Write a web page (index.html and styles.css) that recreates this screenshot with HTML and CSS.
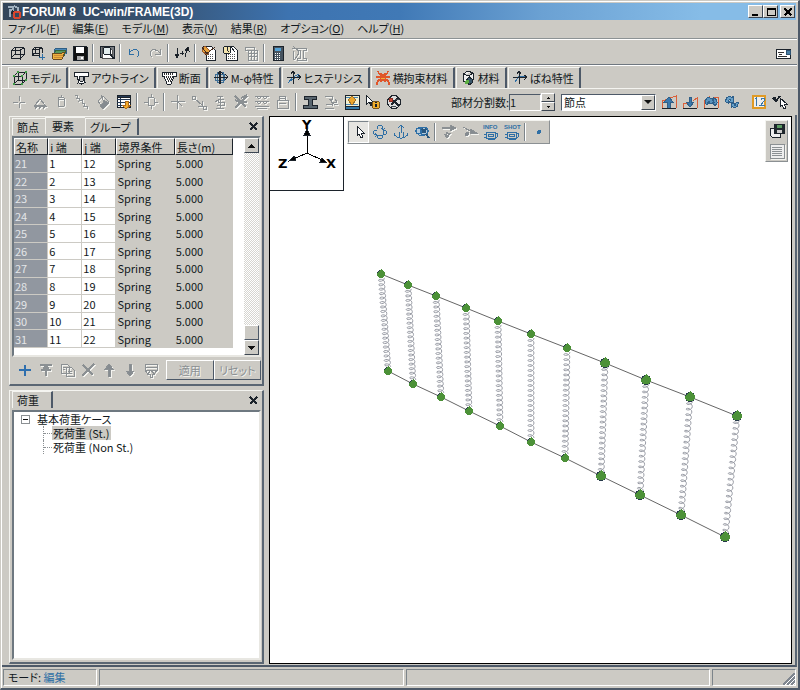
FILE: index.html
```html
<!DOCTYPE html>
<html lang="ja">
<head>
  <meta charset="UTF-8">
  <title>FORUM 8 UC-win/FRAME(3D)</title>
  <link rel="stylesheet" href="styles.css">
</head>
<body>
  <div class="ventana">
    <header class="titulo">
      <svg class="logo" width="16" height="16" viewBox="0 0 16 16"><path d="M2 3h5v3H4v7M8 2l4 2v3" fill="none" stroke="#9fb0bf" stroke-width="2"/><path d="M6 6l4 3-5 1" fill="#20262e"/><circle cx="11" cy="11" r="3.5" fill="none" stroke="#d8452e" stroke-width="2"/></svg>
      <h1>FORUM 8 &nbsp;UC-win/FRAME(3D)</h1>
      <div class="controles">
        <button aria-label="最小化"><svg width="12" height="10"><path d="M2 8h6" stroke="#000" stroke-width="2"/></svg></button>
        <button aria-label="最大化"><svg width="12" height="10"><path d="M2 1.5h8v7H2zM2 2h8" fill="none" stroke="#000"/></svg></button>
        <button class="cerrar" aria-label="閉じる"><svg width="12" height="10"><path d="M2.500 1.500l7 7m0-7l-7 7" stroke="#000" stroke-width="1.500"/></svg></button>
      </div>
    </header>

    <nav class="menu">
      <a href="#">ファイル(<u>F</u>)</a>
      <a href="#">編集(<u>E</u>)</a>
      <a href="#">モデル(<u>M</u>)</a>
      <a href="#">表示(<u>V</u>)</a>
      <a href="#">結果(<u>R</u>)</a>
      <a href="#">オプション(<u>O</u>)</a>
      <a href="#">ヘルプ(<u>H</u>)</a>
    </nav>

    <div class="barra principal">
      <button aria-label="新規"><svg viewBox="0 0 16 16"><path d="M2 6l9-1v9l-9-1zM2 6l4-4 9 1-4 2M15 3v7l-4 4M6 2v7l9 1M6 9l-4 4"/></svg></button>
      <button aria-label="追加"><svg viewBox="0 0 16 16"><path d="M2 5l7-1v7l-7-1zM2 5l3-3 7 1-3 1M12 3v5M5 2v6h4M5 8l-3 2"/><path class="azul" d="M12 9v6M9 12h6"/></svg></button>
      <button aria-label="開く"><svg viewBox="0 0 16 16"><path d="M3 9V5l2-2h10v6" fill="#4b88b8" stroke="#2f5f85"/><path d="M2 11l3-6h10l-2 6z" fill="#58995d" stroke="#35663b"/><path d="M1 8h10l3-1-3 7H2z" fill="#efb23f" stroke="#6b4a20"/><path d="M3 10h9M3 12h8" stroke="#c98a35"/></svg></button>
      <button aria-label="保存"><svg viewBox="0 0 16 16"><path d="M1 1h13l1 1v13H1z" fill="#111"/><path d="M4 2h8v6H4z" fill="#fff" stroke="none"/><path d="M5 11h7v4H5z" fill="#aaa" stroke="none"/><path d="M9 12h2v2H9z" fill="#fff" stroke="none"/></svg></button>
      <i class="sep"></i>
      <button aria-label="印刷プレビュー"><svg viewBox="0 0 16 16"><path d="M1 1h14v11H1z" fill="#777b80"/><path d="M3 2h7l3 3v8H3z" fill="#fff" stroke="#555"/><circle cx="8" cy="6" r="4" fill="#e4eeee"/><path d="M11 9l4 5" stroke-width="2"/></svg></button>
      <i class="sep"></i>
      <button aria-label="元に戻す"><svg viewBox="0 0 16 16"><path class="azul" d="M3 4v5h5M3 8c3-4 9-5 10 0 0 2-1 3-2 4"/></svg></button>
      <button class="apagado" aria-label="やり直し"><svg viewBox="0 0 16 16"><path d="M13 4v5H8M13 8c-3-4-9-5-10 0 0 2 1 3 2 4"/></svg></button>
      <i class="sep"></i>
      <button aria-label="荷重方向"><svg viewBox="0 0 16 16"><path d="M3 3v8M1 9l2 4 2-4zM6 8h4M8 6v4M11 12l2-8M11 5l3-3 1 4z" fill="#111"/></svg></button>
      <i class="sep"></i>
      <button aria-label="計算設定"><svg viewBox="0 0 16 16"><path d="M2 1h8l4 4v10H5V6z" fill="#fff"/><path d="M7 9h6M7 11h6M7 13h6" stroke="#555" stroke-dasharray="1 1"/><path d="M1 4l3-3 5 5-3 4-4-3z" fill="#e6a03b" stroke="#99582a"/><path d="M4 10l10-8M1 2l5 7" stroke="#442b1c"/></svg></button>
      <button aria-label="計算実行"><svg viewBox="0 0 16 16"><path d="M5 1h6l4 4v10H4V6z" fill="#fff"/><path d="M6 9h7M6 11h7M6 13h7" stroke="#555" stroke-dasharray="1 1"/><circle cx="5" cy="5" r="4" fill="#f4e4ad"/><path d="M5 2v3l2 2M9 2l4 5"/></svg></button>
      <button class="apagado" aria-label="結果表"><svg viewBox="0 0 16 16"><path d="M2 2h9v3H2zM5 5h9v10H5zM5 8h9M5 11h9M8 5v10M11 5v10"/></svg></button>
      <i class="sep"></i>
      <button aria-label="電卓"><svg viewBox="0 0 16 16"><path d="M3 1h10v14H3z" fill="#46535f"/><path d="M5 3h6v3H5z" fill="#55a2d6" stroke="none"/><path d="M5 8h6M5 10h6M5 12h6M5 14h6" stroke="#fff" stroke-dasharray="1 1"/></svg></button>
      <button class="apagado" aria-label="断面計算"><svg viewBox="0 0 16 16"><path d="M1 3h4l3 5-4 6H2V6M6 3h9v2h-3v8h3v2H6v-2h3V5H6zM2 1l5 5"/></svg></button>
      <button class="derecha" aria-label="メール"><svg viewBox="0 0 16 16"><path d="M1 4h14v9H1z" fill="#fff"/><path d="M3 7h6M3 11h9M4 9h3" stroke="#333"/><path d="M11 5h4v4h-4z" fill="#477da3" stroke="#2d5272"/></svg></button>
    </div>

    <div class="pestanas" role="tablist">
      <button role="tab" class="activa"><svg viewBox="0 0 16 16"><path d="M2 6h8v8H2zM2 6l4-4h8l-4 4M14 2v8l-4 4M6 2v8h8M6 10l-4 4"/><path d="M2 5v2M10 5v2M6 1v2M14 1v2M2 13v2M10 13v2M14 9v2" stroke="#3f9b45" stroke-width="2"/></svg>モデル</button>
      <button role="tab"><svg viewBox="0 0 16 16"><path d="M1 2h14v4h-3l-1 7H6L4 6H1z" fill="#fff"/><path d="M6 6h5l-1 5H7z" fill="#bbb"/><path d="M4 13v1M8 14v1M12 12v1"/></svg>アウトライン</button>
      <button role="tab"><svg viewBox="0 0 16 16"><path d="M1 2h14v4h-2l-3 8H6L3 6H1z" fill="#fff"/><path d="M3 4h10M5 7h7M6 9h5M7 11h3" stroke="#333" stroke-dasharray="1 1" stroke-width="2"/></svg>断面</button>
      <button role="tab"><svg viewBox="0 0 16 16"><path d="M2 4h9v6H2zM4 2h6v10H4z" stroke="#3e6f97"/><path d="M7 1v13" stroke-width="2"/><path d="M1 7h14M5 4l2-3 3 3M12 4l3 3-3 3"/></svg>M-φ特性</button>
      <button role="tab"><svg viewBox="0 0 16 16"><path class="azul" d="M2 13l5-6 6-3M4 11l9-5"/><path d="M7 1v13M1 7h14M5 4l2-3 2 3M12 5l3 2-3 3"/></svg>ヒステリシス</button>
      <button role="tab"><svg viewBox="0 0 16 16"><path d="M3 1c0 3 2 4 5 4s5-1 5-4M1 7h14M3 10h10M2 15c0-4 2-5 3-5h6c1 0 3 1 3 5M6 3v9M10 3v9" stroke="#e0562a" stroke-width="1.500"/><path d="M6 8h4" stroke="#f2b23a"/></svg>横拘束材料</button>
      <button role="tab"><svg viewBox="0 0 16 16"><path d="M3 4l5-3 5 2v7l-4 4-6-3zM3 4l6 2 4-3M9 6v8" fill="#eee"/><path d="M6 11l3-4 3 2v4l-3 2z" fill="#39576a"/><circle cx="7" cy="12" r="2" fill="#5bad42" stroke="none"/></svg>材料</button>
      <button role="tab"><svg viewBox="0 0 16 16"><path class="azul" d="M3 12l4-6h6"/><path d="M7 1v13M1 7h14M5 4l2-3 2 3M12 5l3 2-3 3"/></svg>ばね特性</button>
    </div>

    <div class="barra secundaria">
      <button class="apagado" aria-label="節点"><svg viewBox="0 0 16 16"><path d="M8 2v5M8 9v5M2 8h5M9 8h5"/></svg></button>
      <button class="apagado" aria-label="支点"><svg viewBox="0 0 16 16"><path d="M8 5l5 6H3zM2 12h13M3 15l2-3M7 15l2-3M11 15l2-3"/></svg></button>
      <button class="apagado" aria-label="部材"><svg viewBox="0 0 16 16"><path d="M5 4l3-1 3 1v8l-3 1-3-1zM5 5h6M8 1v3"/></svg></button>
      <button class="apagado" aria-label="ばね"><svg viewBox="0 0 16 16"><path d="M1 1l3 1-1 2 3 0-1 3 3-1v3h3l-1 3h3l1 3"/></svg></button>
      <button class="apagado" aria-label="塗り"><svg viewBox="0 0 16 16"><path d="M6 1l2 5M3 7l5-5 6 6-6 6z"/><path d="M8 6l6 3-6 6-3-3 3-3z" fill="#858b90"/></svg></button>
      <button aria-label="表取込"><svg viewBox="0 0 16 16"><path d="M1 1h13v12H1z" fill="#fff"/><path d="M1 2h13M1 5h13M1 8h13M1 11h13M4 1v12" stroke="#263a55"/><path d="M1 1h13v2H1z" fill="#263a55"/><path d="M9 7h3v4h3l-5 4-4-4h3z" fill="#f5aa29" stroke="#ab6a1c"/></svg></button>
      <i class="sep"></i>
      <button class="apagado" aria-label="剛体"><svg viewBox="0 0 16 16"><path d="M5 4l3-1 3 1v7l-3 1-3-1zM1 8h4M11 8h4M8 0v3M8 12v3"/></svg></button>
      <i class="sep"></i>
      <button class="apagado" aria-label="座標"><svg viewBox="0 0 16 16"><path d="M7 1v14M1 7h14M7 7l5 5"/></svg></button>
      <button class="apagado" aria-label="移動"><svg viewBox="0 0 16 16"><path d="M1 2h3v3H1zM4 5l7 6M11 7v5H7M12 12h3v3h-3z"/></svg></button>
      <button class="apagado" aria-label="ばね要素"><svg viewBox="0 0 16 16"><path d="M5 2h6M8 2v12M4 14h8M12 5H6v3h6v3H5M3 8l3-2"/></svg></button>
      <button class="apagado" aria-label="削除"><svg viewBox="0 0 16 16"><path d="M2 2l11 11M14 2L2 14M2 6l4 2 8 0M8 4l6-3" stroke-width="1.500"/></svg></button>
      <button class="apagado" aria-label="分布ばね"><svg viewBox="0 0 16 16"><path d="M1 2h14M1 7h14M1 12h14M2 2l3 3 3-3 3 3 3-3M2 7l3 3 3-3 3 3 3-3M3 14h10"/></svg></button>
      <button class="apagado" aria-label="グループ"><svg viewBox="0 0 16 16"><path d="M2 6h11v8H2zM4 6V2h6v4M5 4h5M4 9h7"/></svg></button>
      <i class="sep"></i>
      <button aria-label="H形断面"><svg viewBox="0 0 16 16"><path d="M2 2h12v3h-4v6h5v3H1v-3h5V5H2z" fill="#58646d"/></svg></button>
      <button class="apagado" aria-label="回転"><svg viewBox="0 0 16 16"><path d="M2 2h7v3H6l5 5h4M2 14h9M3 11l7-1M12 5l2 3-4 1M8 5l2 7"/></svg></button>
      <button aria-label="表示設定"><svg viewBox="0 0 16 16"><path d="M1 1h14v11H1z" fill="#f3efd0"/><path d="M2 3h12M2 10h12" stroke="#4786b9"/><path d="M8 2l4 4-4 5-4-5z" fill="#eca52c" stroke="#99702d"/><path d="M1 12h14v3H1z" fill="#357aaa"/></svg></button>
      <button aria-label="情報"><svg viewBox="0 0 16 16"><path d="M1 1v10l3-3 2 4 1-1-2-3h3z" fill="#fff"/><circle cx="11" cy="11" r="4" fill="#f0ad2c" stroke="#7a541d"/><path d="M11 10v3M11 8v1" stroke-width="2"/></svg></button>
      <button aria-label="非表示"><svg viewBox="0 0 16 16"><circle cx="8" cy="8" r="6.500" fill="#ddd"/><path d="M4 4l9 8M12 4L5 11" stroke-width="2"/><circle cx="5" cy="6" r="2" fill="#d04938" stroke="#8a2f24"/><path d="M9 5h4M5 12h5" stroke="#414950"/></svg></button>
      <label class="etiqueta" for="division">部材分割数:</label>
      <input type="text" id="division" value="1">
      <div class="giro">
        <button aria-label="増やす" onclick="cambiarDivision(1)"><svg viewBox="0 0 7 4"><path d="M2 3h3L3.500 1z" fill="#111" stroke="none"/></svg></button>
        <button aria-label="減らす" onclick="cambiarDivision(-1)"><svg viewBox="0 0 7 4"><path d="M2 1h3L3.500 3z" fill="#111" stroke="none"/></svg></button>
      </div>
      <div class="lista">
        <select aria-label="対象"><option>節点</option><option>要素</option></select>
        <span class="flecha"></span>
      </div>
      <button aria-label="上へ"><svg viewBox="0 0 16 16"><path class="rojo" d="M1 14V7l14-5v12"/><path d="M3 8l5-5 4 5H9v6H6V8z" fill="#3978ad" stroke="#315f87"/><path d="M1 14h14"/></svg></button>
      <button aria-label="下へ"><svg viewBox="0 0 16 16"><path class="rojo" d="M1 14V9h4M11 7l4-3v10"/><path d="M7 3h2v5h3l-4 5-4-5h3z" fill="#3978ad" stroke="#315f87"/><path d="M1 14h14"/></svg></button>
      <button aria-label="前へ"><svg viewBox="0 0 16 16"><path class="rojo" d="M1 14V7l6-5M10 3h5v11"/><path d="M2 9c0-5 4-7 6-4l2-1v5H6l1-2C5 7 5 8 4 11zM9 5c3-2 5 1 5 3l1 0-3 4-3-4h2c0-1-1-2-2-1z" fill="#5792bd" stroke="#2e5f8a"/><path d="M1 14h14"/></svg></button>
      <button aria-label="更新"><svg viewBox="0 0 16 16"><path d="M2 8c-1-5 4-7 6-4l1-2v6H5l2-2C5 5 4 6 4 9zM14 8c1 5-4 7-6 4l-1 2V9h5l-2 2c1 1 2 0 2-2z" fill="#67a0c8" stroke="#2e5f8a"/></svg></button>
      <i class="sep hueco"></i>
      <button aria-label="数値表示"><svg viewBox="0 0 16 16"><path d="M2 2h12v12H2z" fill="#eee" stroke="#e09a24" stroke-width="2"/><path d="M4 5l1-1v8M8 11v1M10 6V4h3v3l-3 4h4" stroke="#3977a8"/></svg></button>
      <button aria-label="選択"><svg viewBox="0 0 16 16"><path d="M1 4l3 3 4-5M3 3v4" stroke-width="2"/><path d="M8 4v9l2-2 2 4 2-1-2-4h3z" fill="#fff"/></svg></button>
    </div>

    <main class="contenido">
      <aside class="lateral">
        <section class="panel elementos">
          <div class="cabecera">
            <button class="ficha">節点</button>
            <button class="ficha elegida">要素</button>
            <button class="ficha borde">グループ</button>
            <button class="equis" aria-label="閉じる"><svg viewBox="0 0 9 9"><path d="M1 1l7 7m0-7L1 8" stroke-width="1.500"/></svg></button>
          </div>
          <div class="marco">
            <div class="rejilla">
              <table>
                <thead>
                  <tr><th class="c1">名称</th><th class="c2">i 端</th><th class="c2">j 端</th><th class="c3">境界条件</th><th class="c3">長さ(m)</th></tr>
                </thead>
                <tbody>
                  <tr><th>21</th><td>1</td><td>12</td><td class="fijo">Spring</td><td class="fijo">5.000</td></tr>
                  <tr><th>22</th><td>2</td><td>13</td><td class="fijo">Spring</td><td class="fijo">5.000</td></tr>
                  <tr><th>23</th><td>3</td><td>14</td><td class="fijo">Spring</td><td class="fijo">5.000</td></tr>
                  <tr><th>24</th><td>4</td><td>15</td><td class="fijo">Spring</td><td class="fijo">5.000</td></tr>
                  <tr><th>25</th><td>5</td><td>16</td><td class="fijo">Spring</td><td class="fijo">5.000</td></tr>
                  <tr><th>26</th><td>6</td><td>17</td><td class="fijo">Spring</td><td class="fijo">5.000</td></tr>
                  <tr><th>27</th><td>7</td><td>18</td><td class="fijo">Spring</td><td class="fijo">5.000</td></tr>
                  <tr><th>28</th><td>8</td><td>19</td><td class="fijo">Spring</td><td class="fijo">5.000</td></tr>
                  <tr><th>29</th><td>9</td><td>20</td><td class="fijo">Spring</td><td class="fijo">5.000</td></tr>
                  <tr><th>30</th><td>10</td><td>21</td><td class="fijo">Spring</td><td class="fijo">5.000</td></tr>
                  <tr><th>31</th><td>11</td><td>22</td><td class="fijo">Spring</td><td class="fijo">5.000</td></tr>
                </tbody>
              </table>
            </div>
            <div class="desplazador">
              <button aria-label="上へ"><svg viewBox="0 0 9 6"><path d="M1 5h7L4.500 1z" fill="#111" stroke="none"/></svg></button>
              <div class="pista"><span class="pulgar"></span></div>
              <button aria-label="下へ"><svg viewBox="0 0 9 6"><path d="M1 1h7L4.500 5z" fill="#111" stroke="none"/></svg></button>
            </div>
          </div>
          <div class="acciones">
            <button aria-label="追加"><svg viewBox="0 0 16 16"><path d="M8 3v11M2 8h12" stroke="#2f6fae" stroke-width="2"/></svg></button>
            <button class="apagado" aria-label="挿入"><svg viewBox="0 0 16 16"><path d="M2 3h12M3 8h10M8 4v10M5 7l3-3 3 3" stroke-width="1.500"/></svg></button>
            <button class="apagado" aria-label="コピー"><svg viewBox="0 0 16 16"><path d="M2 2h6l2 2v7H2zM7 5h5l3 3v6H7zM4 5h3M4 7h2M9 9h4M9 11h4"/></svg></button>
            <button class="apagado" aria-label="削除"><svg viewBox="0 0 16 16"><path d="M3 3l10 10M14 2L2 14" stroke-width="2"/></svg></button>
            <button class="apagado" aria-label="上へ"><svg viewBox="0 0 16 16"><path d="M8 2l4 5H9v7H7V7H4z" fill="#858b90"/></svg></button>
            <button class="apagado" aria-label="下へ"><svg viewBox="0 0 16 16"><path d="M8 14l4-5H9V2H7v7H4z" fill="#858b90"/></svg></button>
            <button class="apagado" aria-label="並べ替え"><svg viewBox="0 0 16 16"><path d="M2 2h12v3H2zM2 5v3h12V5M2 8l2 3h2M14 8l-2 3h-2M8 8l3 4H9v3H7v-3H5z"/></svg></button>
            <div class="botones">
              <button class="boton" disabled>適用</button>
              <button class="boton" disabled>リセット</button>
            </div>
          </div>
        </section>

        <section class="panel cargas">
          <div class="cabecera">
            <button class="ficha elegida borde">荷重</button>
            <button class="equis" aria-label="閉じる"><svg viewBox="0 0 9 9"><path d="M1 1l7 7m0-7L1 8" stroke-width="1.500"/></svg></button>
          </div>
          <div class="marco arbol">
            <ul>
              <li>
                <div class="nodo"><span class="caja"></span>基本荷重ケース</div>
                <ul>
                  <li><span class="marcado">死荷重 (St.)</span></li>
                  <li><span>死荷重 (Non St.)</span></li>
                </ul>
              </li>
            </ul>
          </div>
        </section>
      </aside>

      <section class="vista">
        <svg id="modelo" class="modelo"></svg>
        <div class="ejes">
          <svg width="73" height="73" viewBox="0 0 73 73"><path d="M37 36V14M37 36l-16 7M37 36l17 8" fill="none" stroke="#000"/><path d="M37 12l3 6h-6zM19 44l5-5 2 4zM56 45l-6 0 2-4z" fill="#000"/><text x="32" y="12">Y</text><text x="8" y="51">Z</text><text x="56" y="51">X</text></svg>
        </div>
        <div class="flotante">
          <button class="pulsado" aria-label="選択"><svg viewBox="0 0 16 16"><path d="M6 2v10l2-2 2 4 2-1-2-4h3z" fill="#fff"/></svg></button>
          <button aria-label="回転"><svg viewBox="0 0 16 16"><path class="azul" d="M5 5c0-5 6-5 6 0v6c0 5-6 5-6 0M5 6C0 6 0 11 5 11h6c5 0 5-5 0-5M3 9l2 2-2 2M9 4l2 2 2-2"/></svg></button>
          <button aria-label="移動"><svg viewBox="0 0 16 16"><path class="azul" d="M8 1v8M5 4l3-3 3 3M6 8v5H4l-2-2M1 9l1 3M10 8v5h2l2-2M15 9l-1 3M6 13l2 2 2-2"/></svg></button>
          <button aria-label="拡大"><svg viewBox="0 0 16 16"><path class="azul" d="M1 7l4-4h7l3 4-4 4H5z" fill="#b4c9d9"/><circle cx="5" cy="7" r="3" class="azul"/><circle cx="10" cy="7" r="4" class="azul"/><path d="M12 10l3 4M8 5l4 4M12 5L8 9" stroke="#28577f" stroke-width="2"/></svg></button>
          <i class="sep"></i>
          <button class="apagado" aria-label="視点"><svg viewBox="0 0 16 16"><path d="M1 4h9" stroke-width="2"/><path d="M9 1l6 3-6 3z" fill="#858b90"/><path d="M9 9l-3 4-2-3M6 8v2" stroke-width="2"/></svg></button>
          <button class="apagado" aria-label="飛行"><svg viewBox="0 0 16 16"><path d="M1 3l9 5"/><path d="M8 5l7 4H8z" fill="#858b90"/><circle cx="5" cy="10" r="2" fill="#858b90" stroke="none"/></svg></button>
          <button class="letrero" aria-label="情報"><span>INFO</span><svg viewBox="0 0 16 10"><path class="azul" d="M3 2h9v6H3zM1 4h2M1 7h2M5 4h5v2H5zM12 3h2v4l-2 2H5"/></svg></button>
          <button class="letrero" aria-label="撮影"><span>SHOT</span><svg viewBox="0 0 16 10"><path class="azul" d="M3 2h9v6H3zM1 4h2M1 7h2M5 4h5v2H5zM12 3h2v4l-2 2H5"/></svg></button>
          <i class="sep"></i>
          <button aria-label="点"><svg viewBox="0 0 16 16"><circle cx="8" cy="8" r="2" fill="#2f6fa5" stroke="none"/></svg></button>
        </div>
        <div class="flotante vertical">
          <button aria-label="画像保存"><svg viewBox="0 0 16 16"><path d="M1 5h10v9H3l-2-2z" fill="#eee"/><path d="M5 1h10v9H5z" fill="#20282c"/><path d="M8 2h5v3H8z" fill="#5a9a60" stroke="none"/><path d="M8 7h5v3H8z" fill="#ccc" stroke="none"/></svg></button>
          <button class="apagado" aria-label="一覧"><svg viewBox="0 0 16 16"><path d="M1 1h14v14H1z" fill="#eee"/><path d="M3 4h10M3 6h10M3 8h10M3 10h10M3 12h10"/></svg></button>
        </div>
      </section>
    </main>

    <footer class="estado">
      <div class="modo">モード: <span>編集</span></div>
      <div></div>
      <div></div>
      <div class="final"><svg width="12" height="12" viewBox="0 0 12 12"><path d="M0 12L12 0M4 12l8-8M8 12l4-4" stroke="#808790" stroke-width="2"/><path d="M2 12L12 2M6 12l6-6M10 12l2-2" stroke="#fff"/></svg></div>
    </footer>
  </div>

  <script>
    const arriba = [[111, 157], [138, 168], [166, 179], [196, 191], [228, 204], [261, 217], [297, 231], [335, 246], [376, 263], [420, 280], [467, 299]];
    const abajo = [[118, 254], [143, 267], [171, 280], [199, 294], [230, 309], [261, 325], [295, 341], [331, 359], [370, 378], [411, 398], [455, 420]];
    const modelo = document.getElementById('modelo');

    function dibujar(tipo, atributos) {
      const forma = document.createElementNS('http://www.w3.org/2000/svg', tipo);
      for (const nombre in atributos) {
        forma.setAttribute(nombre, atributos[nombre]);
      }
      modelo.appendChild(forma);
    }

    // resorte en espiral entre dos nodos
    function resorte(a, b) {
      const dx = b[0] - a[0];
      const dy = b[1] - a[1];
      const largo = Math.hypot(dx, dy);
      const ux = dx / largo;
      const uy = dy / largo;
      const vueltas = 20;
      const puntos = [];
      for (let i = 0; i <= vueltas * 12; i++) {
        const angulo = i / 12 * 2 * Math.PI;
        const avance = 4 + (largo - 8) * i / (vueltas * 12) + 2 * Math.sin(angulo);
        const lado = 3 * Math.cos(angulo);
        puntos.push((a[0] + ux * avance + uy * lado).toFixed(1) + ',' + (a[1] + uy * avance - ux * lado).toFixed(1));
      }
      dibujar('polyline', { points: puntos.join(' '), class: 'resorte' });
    }

    function nodo(p, r) {
      dibujar('circle', { cx: p[0], cy: p[1], r: r, class: 'sombra' });
      dibujar('path', { d: `M${p[0]} ${p[1] - r - 1}l${r} ${r}v2l-2 3h-${2 * r - 4}l-2-3v-2z`, class: 'bola' });
    }

    dibujar('polyline', { points: arriba.join(' '), class: 'viga' });
    dibujar('polyline', { points: abajo.join(' '), class: 'viga' });
    arriba.forEach((p, i) => resorte(p, abajo[i]));
    arriba.forEach((p, i) => {
      const r = i < 7 ? 4 : 5;
      nodo(p, r);
      nodo(abajo[i], r);
    });

    function cambiarDivision(paso) {
      const division = document.getElementById('division');
      division.value = Math.max(1, Number(division.value) + paso);
    }
  </script>
</body>
</html>
```

FILE: styles.css
```css
* {
  box-sizing: border-box;
}

body {
  margin: 0;
  font-family: "Noto Sans CJK JP", sans-serif;
  font-size: 11px;
  line-height: 14px;
  font-feature-settings: "palt";
  color: #111820;
  background-color: #cccac4;
}

button,
input,
select {
  font: inherit;
  font-feature-settings: inherit;
  color: inherit;
  border: none;
  padding: 0;
  margin: 0;
  border-radius: 0;
  background: none;
}

svg {
  fill: none;
  stroke: #1c232b;
  display: block;
  shape-rendering: crispEdges;
}

.azul {
  stroke: #2f6fa5;
}

.rojo {
  stroke: #d9603a;
}

.ventana {
  display: flex;
  flex-direction: column;
  height: 100vh;
  padding: 1px;
  border: 1px solid #cccac4;
  border-right: 2px solid #4d5968;
  border-bottom: 2px solid #4d5968;
  box-shadow: inset 1px 1px #fff;
}

/* barra de titulo */
.titulo {
  display: flex;
  align-items: center;
  height: 17px;
  margin: 1px 1px 0;
  padding: 0 1px 0 3px;
  color: white;
  background: linear-gradient(90deg, #34465a 0%, #36516f 18%, #3d73b0 36%, #4079b6 50%, #6ba1d3 68%, #86bce7 88%);
}

.logo {
  stroke: none;
}

.titulo h1 {
  flex: 1;
  margin: 0;
  font-family: "Liberation Sans", sans-serif;
  font-size: 12px;
}

.controles {
  display: flex;
}

.controles button,
.desplazador button,
.giro button,
.flecha {
  display: grid;
  place-items: center;
  background-color: #cccac4;
  border: 1px solid;
  border-color: #fff #3c4652 #3c4652 #fff;
}

.controles button {
  width: 15px;
  height: 13px;
}

.controles .cerrar {
  margin-left: 2px;
}

/* menu */
.menu {
  display: flex;
  gap: 13px;
  height: 19px;
  padding: 1px 6px 0;
  border-bottom: 1px solid #8c9294;
  box-shadow: 0 1px #fff;
}

.menu a {
  color: inherit;
  text-decoration: none;
}

/* barras de herramientas */
.barra {
  display: flex;
  align-items: center;
  flex: none;
}

.barra button,
.acciones button {
  display: grid;
  align-items: center;
  width: 21px;
  height: 20px;
  padding-left: 3px;
}

.barra svg,
.acciones svg,
.pestanas svg,
.flotante svg {
  width: 16px;
  height: 16px;
}

.apagado svg {
  stroke: #8b9093;
  filter: drop-shadow(1px 1px 0 #f4f4f0);
}

.principal {
  height: 26px;
  padding: 2px 4px 0;
  border-bottom: 1px solid #6f7780;
  box-shadow: 0 1px #fff;
}

.sep {
  flex: none;
  width: 2px;
  height: 18px;
  margin: 0 2px;
  border-left: 1px solid #7c848a;
  border-right: 1px solid #fff;
}

.hueco {
  visibility: hidden;
}

.barra .derecha {
  margin-left: auto;
}

.pestanas {
  display: flex;
  flex: none;
  gap: 1px;
  height: 23px;
  padding: 2px 6px 0;
}

.pestanas button {
  display: flex;
  align-items: center;
  gap: 2px;
  padding: 0 5px 0 3px;
  white-space: nowrap;
  border-top: 1px solid #f4f4f0;
  border-left: 1px solid #f4f4f0;
  border-right: 2px solid #4d5968;
}

.secundaria {
  height: 27px;
  padding: 0 6px;
  border-top: 1px solid #f4f4f0;
}

.etiqueta {
  margin-left: 47px;
}

#division {
  width: 32px;
  height: 17px;
  border: 1px solid;
  border-color: #4d5968 #fff #fff #4d5968;
}

.giro {
  display: flex;
  flex-direction: column;
}

.giro button {
  place-items: center;
  width: 14px;
  height: 9px;
  padding: 0;
}

.giro svg {
  width: 7px;
  height: 4px;
}

.lista {
  position: relative;
  margin: 0 2px 0 6px;
}

.lista select {
  display: block;
  width: 95px;
  height: 17px;
  padding: 0 2px;
  appearance: none;
  background-color: white;
  border: 1px solid;
  border-color: #4d5968 #fff #fff #4d5968;
}

.flecha {
  position: absolute;
  top: 1px;
  right: 1px;
  width: 14px;
  height: 15px;
  pointer-events: none;
}

.flecha::before {
  content: "";
  border: 4px solid transparent;
  border-top-color: #111;
  border-bottom: none;
}

/* contenido */
.contenido {
  display: flex;
  flex: 1;
  min-height: 0;
  padding: 1px 3px 1px 7px;
  border-right: 2px solid #5a6673;
  border-bottom: 2px solid #4d5968;
}

.lateral {
  display: flex;
  flex-direction: column;
  gap: 4px;
  flex: none;
  width: 255px;
}

.panel {
  display: flex;
  flex-direction: column;
  padding: 0 1px 2px 2px;
  border: 1px solid #f4f4f0;
  border-right: 2px solid #5a6673;
  border-bottom: 2px solid #5a6673;
}

.cargas {
  flex: 1;
}

.cabecera {
  display: flex;
  height: 19px;
}

.ficha {
  height: 17px;
  padding: 0 6px 0 4px;
  margin-top: 1px;
  border-top: 1px solid #f4f4f0;
  border-left: 1px solid #f4f4f0;
}

.elegida {
  margin-top: 0;
  padding: 0 11px 0 6px;
}

.borde {
  border-right: 2px solid #4d5968;
}

.cargas .ficha {
  padding: 0 12px 0 4px;
}

.equis {
  width: 9px;
  margin: 0 3px 0 auto;
}

.marco {
  display: flex;
  background-color: white;
  border: 2px solid;
  border-color: #6e7880 #e8e7e2 #e8e7e2 #6e7880;
}

.rejilla {
  flex: 1;
  height: 217px;
}

.rejilla table {
  width: 219px;
  height: 210px;
  border-collapse: separate;
  border-spacing: 0;
  table-layout: fixed;
}

.rejilla th,
.rejilla td {
  padding: 0 1px;
  text-align: left;
  font-weight: normal;
  border-right: 1px solid #cccac4;
  border-bottom: 1px solid #cccac4;
}

.rejilla thead th {
  height: 17px;
  background-color: #cccac4;
  border: 1px solid;
  border-color: #fff #1c232b #1c232b #fff;
}

.rejilla tbody th {
  color: #e4e6e8;
  background-color: #9197a0;
}

.rejilla .c1,
.rejilla .c2 {
  width: 34px;
}

.rejilla .c3 {
  width: 58px;
}

.rejilla .fijo {
  background-color: #cccac4;
}

.desplazador {
  display: flex;
  flex-direction: column;
  width: 15px;
}

.desplazador button {
  height: 15px;
}

.desplazador svg {
  width: 9px;
  height: 6px;
}

.pista {
  display: flex;
  flex-direction: column;
  justify-content: flex-end;
  flex: 1;
  background: repeating-conic-gradient(#fff 0 25%, #d6d5d0 0 50%) 0 0 / 2px 2px;
}

.pulgar {
  height: 15px;
  background-color: #cccac4;
  border: 1px solid;
  border-color: #fff #4d5968 #4d5968 #fff;
}

.acciones {
  display: flex;
  align-items: center;
  height: 25px;
  padding-left: 2px;
}

.botones {
  display: flex;
  flex: 1;
  margin-left: 5px;
}

.acciones .boton {
  flex: 1;
  padding: 0;
  text-align: center;
  white-space: nowrap;
  color: #8b9093;
  text-shadow: 1px 1px #f4f4f0;
  border: 1px solid;
  border-color: #fff #4d5968 #4d5968 #fff;
}

.arbol {
  flex: 1;
}

.arbol ul {
  margin: 0;
  padding: 0;
  list-style: none;
}

.arbol > ul {
  padding: 0 7px;
}

.nodo {
  display: flex;
  align-items: center;
  gap: 7px;
}

.caja {
  display: grid;
  place-items: center;
  width: 9px;
  height: 9px;
  border: 1px solid #8b9093;
}

.caja::before {
  content: "";
  width: 5px;
  height: 1px;
  background-color: #111;
}

.arbol ul ul {
  margin-left: 22px;
}

.arbol ul ul li {
  display: flex;
  border-left: 1px dotted #8b9093;
}

.arbol ul ul li::before {
  content: "";
  width: 8px;
  height: 7px;
  border-bottom: 1px dotted #8b9093;
}

.arbol ul ul span {
  padding: 0 2px 0 1px;
}

.arbol .marcado {
  background-color: #cccac4;
}

/* vista 3D */
.vista {
  position: relative;
  flex: 1;
  margin-left: 5px;
  background-color: white;
  border: 1px solid #000;
}

.modelo {
  width: 100%;
  height: 100%;
}

.viga {
  stroke: #666;
  shape-rendering: auto;
}

.resorte {
  stroke: #9a9da6;
  shape-rendering: auto;
}

.sombra {
  fill: #26394a;
  stroke: none;
}

.bola {
  fill: #4c9138;
  stroke: none;
}

.ejes {
  position: absolute;
  top: 0;
  left: 0;
  border-right: 1px solid #1c232b;
  border-bottom: 1px solid #1c232b;
}

.ejes text {
  font-family: "DejaVu Sans", sans-serif;
  font-size: 13px;
  font-weight: bold;
  fill: #000;
  stroke: none;
}

.flotante {
  position: absolute;
  top: 3px;
  left: 77px;
  display: flex;
  align-items: center;
  background-color: #cccac4;
  border: 1px solid;
  border-color: #f4f4f0 #8b9093 #8b9093 #f4f4f0;
}

.flotante button {
  display: grid;
  align-items: center;
  width: 21px;
  height: 22px;
  padding-left: 3px;
}

.flotante .pulsado {
  padding-left: 2px;
  background-color: #e6e5e1;
  border: 1px solid;
  border-color: #7c848a #fff #fff #7c848a;
}

.flotante .letrero {
  align-content: center;
}

.letrero span {
  font-family: "Liberation Sans", sans-serif;
  font-size: 6px;
  line-height: 6px;
  text-align: left;
  font-weight: bold;
  color: #2f6fa5;
}

.flotante .letrero svg {
  height: 10px;
}

.vertical {
  flex-direction: column;
  left: auto;
  right: 3px;
}

.vertical button {
  height: 20px;
}

/* barra de estado */
.estado {
  display: grid;
  grid-template-columns: 94px 1fr 1fr 84px;
  gap: 2px;
  flex: none;
  height: 20px;
  padding: 2px 1px 1px;
}

.estado div {
  border: 1px solid;
  border-color: #7c848a #fff #fff #7c848a;
}

.estado .modo {
  padding-left: 4px;
}

.modo span {
  color: #2f6fa5;
}

.final {
  display: flex;
  justify-content: flex-end;
  align-items: flex-end;
}
```
